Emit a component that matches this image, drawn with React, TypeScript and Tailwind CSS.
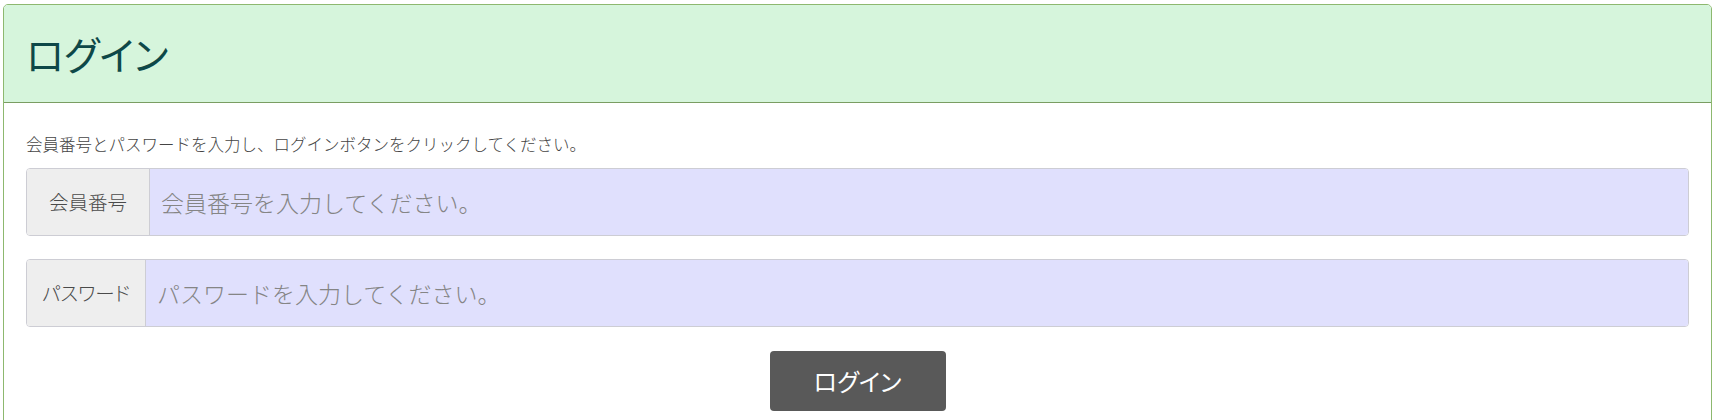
const font = "font-['Noto_Sans_CJK_JP','Noto_Sans',sans-serif] font-light";

const Field = ({
  label,
  placeholder,
  type,
  labelWidth,
}: {
  label: string;
  placeholder: string;
  type: string;
  labelWidth: string;
}) => (
  <div className="flex h-[68px] border border-[#cdcdd4] rounded-[4px] overflow-hidden">
    <span
      className={`flex items-center justify-center ${labelWidth} shrink-0 bg-[#eeeeee] border-r border-[#cdcdd4] text-[19.5px] text-[#4a4a4a] [font-feature-settings:'palt']`}
    >
      {label}
    </span>
    <input
      type={type}
      placeholder={placeholder}
      className="flex-1 bg-[#e0e0fd] px-[11px] text-[23px] font-light text-[#333] placeholder:text-[#858585] outline-none"
    />
  </div>
);

export default function App() {
  return (
    <div className={`${font} bg-white min-h-screen pt-[4px] px-[3px]`}>
      <section className="border border-[#8db86f] rounded-t-[5px] overflow-hidden">
        <header className="h-[98px] flex items-center px-[22px] bg-[#d6f5dc] border-b border-[#7a9d62]">
          <h1 className="text-[39px] font-normal text-[#0e4848] leading-none [font-feature-settings:'palt']">ログイン</h1>
        </header>
        <div className="px-[22px] pt-[28px] pb-[30px]">
          <p className="text-[16.5px] leading-[26px] text-[#444] mb-[11px]">
            会員番号とパスワードを入力し、ログインボタンをクリックしてください。
          </p>
          <div className="flex flex-col gap-[23px]">
            <Field label="会員番号" placeholder="会員番号を入力してください。" type="text" labelWidth="w-[123px]" />
            <Field label="パスワード" placeholder="パスワードを入力してください。" type="password" labelWidth="w-[119px]" />
          </div>
          <div className="flex justify-center mt-[24px]">
            <button className="w-[176px] h-[60px] bg-[#595959] rounded-[4px] text-white text-[24px] font-normal [font-feature-settings:'palt']">
              ログイン
            </button>
          </div>
        </div>
      </section>
    </div>
  );
}
